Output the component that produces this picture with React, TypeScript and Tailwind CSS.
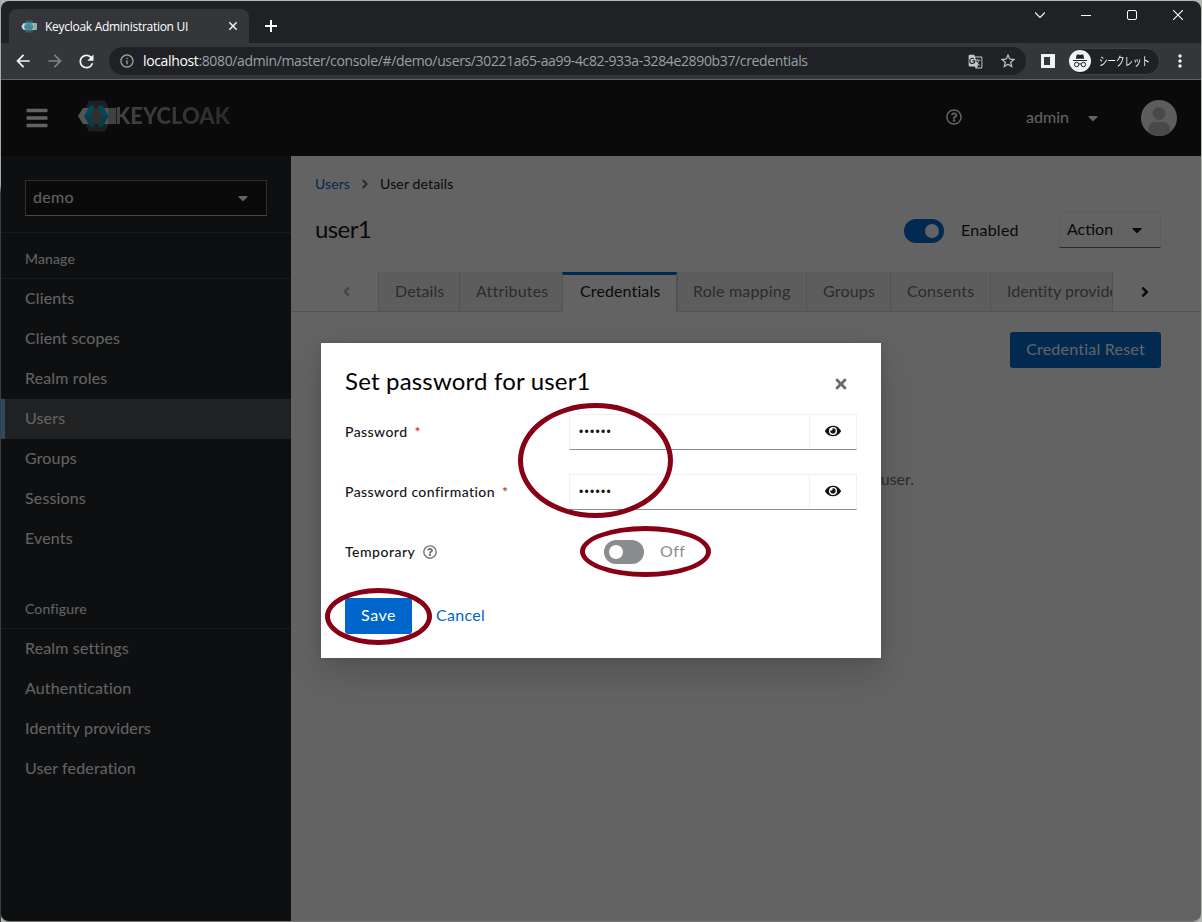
import type { ReactNode } from 'react';
import { FaAngleLeft, FaAngleRight, FaBars, FaCaretDown, FaEye, FaRegQuestionCircle, FaTimes } from 'react-icons/fa';
import { MdArrowBack, MdArrowForward, MdGTranslate, MdInfoOutline, MdMoreVert, MdRefresh, MdStarBorder } from 'react-icons/md';

const manageItems = ['Clients', 'Client scopes', 'Realm roles', 'Users', 'Groups', 'Sessions', 'Events'];
const configureItems = ['Realm settings', 'Authentication', 'Identity providers', 'User federation'];

const tabs = [
  { label: 'Details', className: 'w-[81px] pl-4 tracking-[0.1px]' },
  { label: 'Attributes', className: 'w-[103px] pl-4 tracking-[0.2px]' },
  { label: 'Credentials', className: 'w-[115px] pl-[17px] tracking-[0.12px]', active: true },
  { label: 'Role mapping', className: 'w-[129px] pl-[15px] tracking-[0.2px]' },
  { label: 'Groups', className: 'w-[84px] pl-4 tracking-[0.2px]' },
  { label: 'Consents', className: 'w-[100px] pl-4 tracking-[0.25px]' },
  { label: 'Identity provider links', className: 'w-[200px] pl-4 tracking-[0.02px]' },
];

function KeycloakMark({ className }: { className?: string }) {
  return (
    <svg viewBox="0 0 38 32" className={className}>
      <path d="M11 0.500h16l8 15.500-8 15.500H11L3 16z" fill="#4d4d4d" />
      <path d="M5 8h33v16H5L0 16z" fill="#d8d8d8" />
      <path d="M30 8h8v16h-8z" fill="#a5a5a5" />
      <path d="M12 8h14l4 8-4 8H12l-4-8z" fill="#777" />
      <path d="M12 5.500h5L11.500 16H6z" fill="#00b8e3" />
      <path d="M6 16h5.500L17 26.500h-5z" fill="#00a0c6" />
      <path d="M19.500 5.500h5L30.500 16H25z" fill="#00b8e3" />
      <path d="M25 16h5.500l-6 10.500h-5z" fill="#00a0c6" />
    </svg>
  );
}

function IncognitoIcon() {
  return (
    <svg viewBox="0 0 22 22" className="size-[22px] shrink-0">
      <circle cx="11" cy="11" r="11" fill="#f1f3f4" />
      <path d="M7.800 4.500h1.700l1.500.5 1.500-.5h1.700l1 4.200H6.800z" fill="#202124" />
      <path d="M4 10.500h14" stroke="#202124" strokeWidth="1" />
      <g fill="none" stroke="#202124" strokeWidth="1">
        <circle cx="7.600" cy="14.500" r="2.200" />
        <circle cx="14.400" cy="14.500" r="2.200" />
        <path d="M9.800 14.200c.8-.5 1.600-.5 2.400 0" />
      </g>
    </svg>
  );
}

function TabStrip() {
  return (
    <div className="flex h-[42px] bg-[#202124] text-white">
      <div className="mt-2 ml-2 flex h-[34px] w-60 items-center rounded-t-lg bg-[#35363a] pr-3 pl-3">
        <KeycloakMark className="h-[13px] w-4" />
        <span className="mt-px ml-2 flex-1 font-['Open_Sans',sans-serif] text-xs tracking-[-0.28px] whitespace-nowrap">
          Keycloak Administration UI
        </span>
        <svg viewBox="0 0 8 8" className="size-2">
          <path d="M0.300.3l7.400 7.400M7.700.3L.3 7.700" stroke="#f1f3f4" strokeWidth="1.500" />
        </svg>
      </div>
      <svg viewBox="0 0 12 12" className="mt-[19px] ml-4 size-3">
        <path d="M6 0v12M0 6h12" stroke="#fff" strokeWidth="2" />
      </svg>
      <div className="ml-auto flex h-7 items-center">
        <svg viewBox="0 0 10 6" className="mr-9 h-1.5 w-2.5" fill="none">
          <path d="M0 .5l5 5 5-5" stroke="#fff" strokeWidth="1.100" />
        </svg>
        <div className="mr-9 h-px w-2.5 bg-white" />
        <div className="mr-9 size-2.5 rounded-[2px] border border-white" />
        <svg viewBox="0 0 10 10" className="mr-[18px] size-2.5">
          <path d="M0 0l10 10M10 0L0 10" stroke="#fff" strokeWidth="1.100" />
        </svg>
      </div>
    </div>
  );
}

function AddressBar() {
  return (
    <div className="flex h-[37px] items-center border-b border-[#5f6164] bg-[#35363a]">
      <MdArrowBack size={20} className="ml-3 text-[#f1f3f4]" />
      <MdArrowForward size={20} className="ml-3 text-[#808286]" />
      <MdRefresh size={21} className="ml-[11px] text-[#f1f3f4]" />
      <div className="ml-3 flex h-7 w-[917px] items-center rounded-full bg-[#202124] pl-2.5">
        <MdInfoOutline size={16} className="text-[#9aa0a6]" />
        <p className="ml-2 w-[820px] font-['Open_Sans',sans-serif] text-sm tracking-[-0.36px] whitespace-nowrap text-[#9aa0a6]">
          <span className="text-white">localhost</span>
          :8080/admin/master/console/#/demo/users/30221a65-aa99-4c82-933a-3284e2890b37/credentials
        </p>
        <MdGTranslate size={15} className="ml-[5px] text-[#c4c7cb]" />
        <MdStarBorder size={18} className="ml-4 text-[#c4c7cb]" />
      </div>
      <div className="ml-[15px] h-3.5 w-3.5 border-[3px] border-r-[5px] border-[#f1f3f4]" />
      <div className="ml-[13px] flex h-[27px] w-[92px] items-center rounded-full border border-[#3f4145] bg-[#202124]">
        <IncognitoIcon />
        <span className="ml-2 w-[51px] origin-left scale-x-[0.71] font-['Noto_Sans_CJK_JP',sans-serif] text-xs leading-none whitespace-nowrap text-white">
          シークレット
        </span>
      </div>
      <MdMoreVert size={20} className="ml-2.5 text-[#f1f3f4]" />
    </div>
  );
}

function Masthead() {
  return (
    <header className="flex h-[76px] items-center bg-[#151515] text-white">
      <FaBars size={24} className="ml-6" />
      <KeycloakMark className="-mt-1 ml-[29px] h-8 w-[38px]" />
      <span className="-mt-1 -ml-px bg-linear-to-r from-[#aaa] to-[#6c6c6c] bg-clip-text text-[22px] leading-8 font-black text-transparent">
        KEYCLOAK
      </span>
      <FaRegQuestionCircle size={16} className="mr-16 mb-0.5 ml-auto" />
      <span className="pb-0.5 tracking-[0.04px]">admin</span>
      <FaCaretDown size={16} className="mr-10 ml-4" />
      <svg viewBox="0 0 36 36" className="mr-6 size-9">
        <clipPath id="avatar">
          <circle cx="18" cy="18" r="18" />
        </clipPath>
        <g clipPath="url(#avatar)">
          <rect width="36" height="36" fill="#f0f0f0" />
          <circle cx="18" cy="13.500" r="6.500" fill="#b8bbbe" />
          <path d="M7 36v-6c0-5 3-8 7.500-8h7c4.500 0 7.500 3 7.500 8v6z" fill="#b8bbbe" />
        </g>
      </svg>
    </header>
  );
}

function NavSection({ title, items }: { title: string; items: string[] }) {
  return (
    <section>
      <h2 className="border-b border-[#3c3f42] pb-[9px] pl-6 text-sm leading-[21px] tracking-[0.15px]">{title}</h2>
      <ul>
        {items.map((item) => (
          <li
            key={item}
            className={
              item === 'Users'
                ? 'flex h-10 items-center border-l-4 border-[#73bcf7] bg-[#4f5255] pb-0.5 pl-5 tracking-[0.15px]'
                : 'flex h-10 items-center pb-0.5 pl-6 tracking-[0.15px]'
            }
          >
            {item}
          </li>
        ))}
      </ul>
    </section>
  );
}

function Sidebar() {
  return (
    <nav className="w-[290px] shrink-0 bg-[#212427] text-white">
      <div className="border-b border-[#3c3f42] px-6 pt-6 pb-4">
        <div className="flex h-9 w-[242px] items-center justify-between border border-[#72767b] border-b-[#b8bbbe] bg-[#151515] pr-[15px] pl-[7px]">
          <span className="pb-0.5 tracking-[0.3px]">demo</span>
          <FaCaretDown size={16} className="mb-px" />
        </div>
      </div>
      <div className="pt-[15px]">
        <NavSection title="Manage" items={manageItems} />
      </div>
      <div className="pt-[39px]">
        <NavSection title="Configure" items={configureItems} />
      </div>
    </nav>
  );
}

function tabClass(className: string, active?: boolean) {
  const base = `flex h-10 shrink-0 items-center border-l border-[#d2d2d2] whitespace-nowrap ${className}`;
  if (active) {
    return `${base} border-t-[3px] border-r border-t-[#0066cc] bg-white pb-[5px]`;
  }
  return `${base} border-b bg-[#f0f0f0] pb-px text-[#6a6e73]`;
}

function UserDetails() {
  return (
    <main className="min-w-0 flex-1 bg-white">
      <div className="flex items-center pt-[17px] pl-6 text-sm leading-[21px]">
        <span className="tracking-[0.1px] text-[#0066cc]">Users</span>
        <FaAngleRight size={14} className="mx-2 text-[#6a6e73]" />
        <span className="tracking-[0.15px]">User details</span>
      </div>
      <div className="mt-[18px] flex h-9 items-center pr-10 pl-6">
        <h1 className="flex-1 pb-[3px] text-2xl tracking-[-0.6px]">user1</h1>
        <div className="mt-0.5 flex h-6 w-10 items-center justify-end rounded-full bg-[#0066cc] pr-[5px]">
          <div className="size-3.5 rounded-full bg-white" />
        </div>
        <span className="ml-[17px] w-[58px] tracking-[0.25px]">Enabled</span>
        <div className="ml-10 flex h-9 w-[102px] items-center border border-[#f0f0f0] border-b-[#6a6e73] pl-[7px]">
          <span className="pb-0.5">Action</span>
          <FaCaretDown size={16} className="ml-4" />
        </div>
      </div>
      {/* Tabs */}
      <div className="mt-6 flex h-10 border-b border-[#d2d2d2]">
        <div className="flex w-[87px] items-center justify-end pr-6 text-[#b0b2b5]">
          <FaAngleLeft size={15} />
        </div>
        <div className="-mb-px flex w-[735px] overflow-hidden border-r border-[#d2d2d2]">
          {tabs.map((tab) => (
            <div key={tab.label} className={tabClass(tab.className, tab.active)}>
              {tab.label}
            </div>
          ))}
        </div>
        <div className="flex items-center pl-6">
          <FaAngleRight size={16} />
        </div>
      </div>
      <div className="flex justify-end pt-5 pr-10">
        <div className="flex h-9 w-[151px] items-center justify-center rounded-[3px] bg-[#0066cc] pb-0.5 tracking-[0.22px] text-white">
          Credential Reset
        </div>
      </div>
      <p className="flex justify-end pt-[99px] pr-[287px] text-[#6a6e73]">user.</p>
    </main>
  );
}

function FormRow({ label, required, children }: { label: ReactNode; required?: boolean; children: ReactNode }) {
  return (
    <div className="flex h-9 items-center">
      <div className="flex w-56 items-center text-sm font-medium tracking-[0.42px]">
        {label}
        {required && <span className="ml-[7px] text-[#c9190b]">*</span>}
      </div>
      {children}
    </div>
  );
}

function PasswordInput() {
  return (
    <div className="flex h-9 w-72 border border-[#f0f0f0] border-b-[#8a8d90]">
      <div className="flex-1 pl-[9px] font-['Liberation_Sans',sans-serif] text-xs leading-[35px] tracking-[1.300px]">••••••</div>
      <div className="flex w-[47px] items-center justify-center border-l border-[#f0f0f0] pb-0.5">
        <FaEye size={16} />
      </div>
    </div>
  );
}

function PasswordModal() {
  return (
    <div className="relative h-[315px] w-[560px] bg-white px-6 pt-6 shadow-[0_16px_32px_0_rgba(3,3,3,0.16),0_0_8px_0_rgba(3,3,3,0.1)]">
      <div className="flex h-[31px] items-center justify-between">
        <h2 className="pb-[3px] text-2xl tracking-[0.18px] text-black">Set password for user1</h2>
        <FaTimes size={16} className="mt-0.5 mr-2 text-[#6a6e73]" />
      </div>
      <div className="mt-4 flex flex-col gap-6">
        <FormRow label="Password" required>
          <PasswordInput />
        </FormRow>
        <FormRow label="Password confirmation" required>
          <PasswordInput />
        </FormRow>
        <FormRow
          label={
            <>
              <span className="tracking-[0.5px]">Temporary</span>
              <FaRegQuestionCircle size={14} className="ml-2 text-[#6a6e73]" />
            </>
          }
        >
          <div className="ml-[35px] flex h-6 w-10 items-center rounded-full bg-[#8a8d90] pl-[5px]">
            <div className="size-3.5 rounded-full bg-white" />
          </div>
          <span className="ml-4 pb-0.5 tracking-[0.5px] text-[#8a8d90]">Off</span>
        </FormRow>
      </div>
      <div className="mt-7 flex h-9 items-center">
        <div className="flex h-9 w-[67px] items-center justify-center rounded-[3px] bg-[#0066cc] pb-0.5 tracking-[0.5px] text-white">Save</div>
        <span className="ml-6 pb-0.5 tracking-[0.3px] text-[#0066cc]">Cancel</span>
      </div>
      {/* Hand-drawn markers around the fields to fill in */}
      <div className="absolute top-[60px] left-[197px] h-[115px] w-[155px] rounded-[50%] border-5 border-[#880015]" />
      <div className="absolute top-[183px] left-[259px] h-[51px] w-[131px] rounded-[50%] border-5 border-[#880015]" />
      <div className="absolute top-[245px] left-1 h-[57px] w-[107px] rounded-[50%] border-5 border-[#880015]" />
    </div>
  );
}

export default function App() {
  return (
    <div className="flex h-[922px] w-[1202px] bg-[#b3b7b2] font-['Lato',sans-serif] text-base text-[#151515]">
      <div className="w-px bg-linear-to-b from-[#a9aaab] from-20% to-[#3c3d3f] to-21%" />
      <div className="mt-px flex w-[1200px] flex-col overflow-hidden rounded-lg border-b border-[#777]">
        <TabStrip />
        <AddressBar />
        <div className="relative flex flex-1 flex-col">
          <Masthead />
          <div className="flex flex-1">
            <Sidebar />
            <UserDetails />
          </div>
          <div className="absolute inset-0 flex items-start justify-center bg-[#030303]/62 pt-[263px]">
            <PasswordModal />
          </div>
        </div>
      </div>
    </div>
  );
}
